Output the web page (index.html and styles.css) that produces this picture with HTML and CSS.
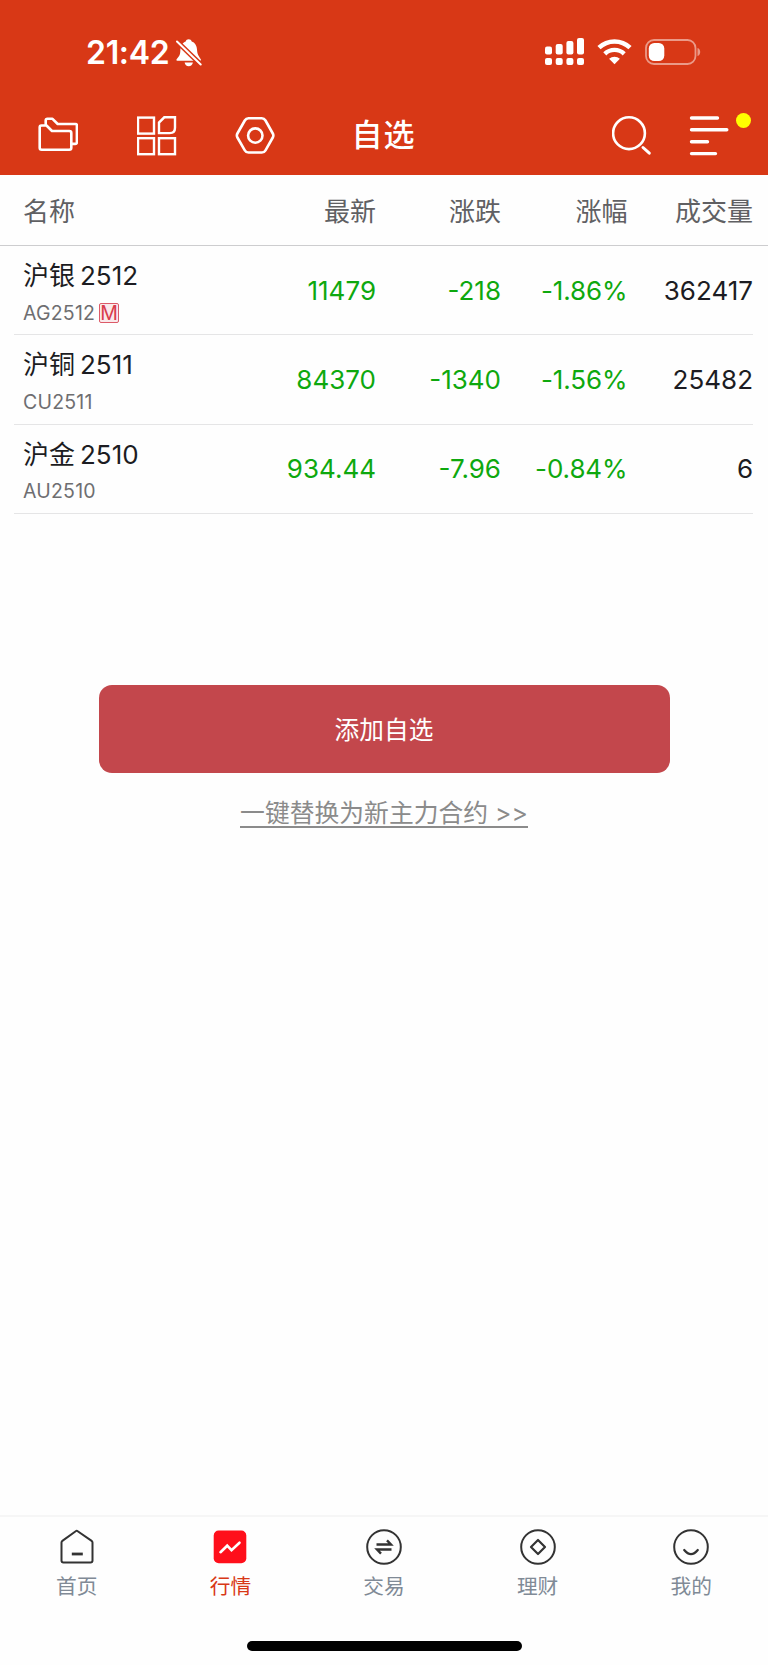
FILE: index.html
```html
<!DOCTYPE html>
<html lang="zh-CN">
<head>
    <meta charset="UTF-8">
    <meta name="viewport" content="width=device-width, initial-scale=1.0">
    <title>自选</title>
    <link rel="stylesheet" href="styles.css">
</head>
<body>
    <header class="header">
        <div class="status-bar">
            <span class="time">21:42</span>
            <svg class="bell" width="26" height="28" viewBox="0 0 26 28">
                <path d="M1.2 21.700C.3 21.700.2 20.800.8 20c1.700-2.200 3.200-3.200 3.500-7.500C4.500 6.500 6.600 3.600 9.700 2.600 10.100 1 11.200.2 12.700.2s2.600.8 3 2.400c3.100 1 5.200 3.900 5.400 8.900.3 4.300 1.800 5.300 3.500 8.500.6.8.5 1.700-.4 1.700z" fill="#fff"/>
                <path d="M8.600 23.500h8.300c-.4 2.400-2 3.700-4.200 3.700s-3.700-1.300-4.100-3.700z" fill="#fff"/>
                <path d="M1 2.500L24.700 25.500" stroke="#d83816" stroke-width="5"/>
                <path d="M1 2.500L24.700 25.500" stroke="#fff" stroke-width="2" stroke-linecap="round"/>
            </svg>
            <div class="status-icons">
                <svg width="39" height="28" viewBox="0 0 39 28" fill="#fff">
                    <rect x="0" y="8.500" width="7" height="8" rx="2"/>
                    <rect x="10.700" y="6" width="7" height="10.500" rx="2"/>
                    <rect x="21.400" y="3" width="7" height="13.500" rx="2"/>
                    <rect x="32" y="0" width="7" height="16.500" rx="2"/>
                    <rect x="0" y="20" width="7" height="7" rx="2"/>
                    <rect x="10.700" y="20" width="7" height="7" rx="2"/>
                    <rect x="21.400" y="20" width="7" height="7" rx="2"/>
                    <rect x="32" y="20" width="7" height="7" rx="2"/>
                </svg>
                <svg width="35" height="26" viewBox="0 0 35 26">
                    <path d="M2 8.700a22.500 22.500 0 0 1 31 0" fill="none" stroke="#fff" stroke-width="4.600"/>
                    <path d="M7.800 14.800a14 14 0 0 1 19.400 0" fill="none" stroke="#fff" stroke-width="4.400"/>
                    <path d="M17.500 25.200l-5.400-5.400a8 8 0 0 1 10.800 0z" fill="#fff"/>
                </svg>
                <svg class="battery" width="57" height="26" viewBox="0 0 57 26">
                    <rect x="1" y="1" width="49.500" height="24" rx="8" fill="none" stroke="#eb9a88" stroke-width="1.800"/>
                    <rect x="3.800" y="4" width="15.500" height="18" rx="5.500" fill="#fff"/>
                    <path d="M52.500 9c3.600 1 3.600 7 0 8z" fill="#eb9a88"/>
                </svg>
            </div>
        </div>
        <nav class="nav-bar">
            <svg width="40" height="40" viewBox="0 0 40 40" fill="none" stroke="#fff" stroke-width="2.600" stroke-linejoin="round">
                <path d="M1.700 11.200q0-1.700 1.700-1.700H8.500L14 15H31.300q2 0 2 2V31.700q0 2-2 2H3.700q-2 0-2-2z"/>
                <path d="M7.700 9V4.500q0-1.700 1.700-1.700H14.500L19.700 8H37.500q1.400 0 1.400 1.400V26.300q0 1.600-1.600 1.600H34"/>
            </svg>
            <svg width="40" height="40" viewBox="0 0 40 40" fill="none" stroke="#fff" stroke-width="2.400">
                <rect x="1" y="1.600" width="16" height="16"/>
                <rect x="1" y="22.200" width="16" height="16"/>
                <rect x="22" y="22.200" width="16" height="16"/>
                <path d="M22 17.100V6.600l5.300-5.300h10.700v10.500q0 5.300-5.300 5.300z"/>
            </svg>
            <svg class="settings" width="40" height="40" viewBox="0 0 40 40" fill="none" stroke="#fff" stroke-width="2.600">
                <path d="M13.500 2.300h13.300q2.400 0 3.700 2.200l7.300 13q1.100 2 0 4l-7.300 12.800q-1.300 2.200-3.700 2.200H13.500q-2.400 0-3.700-2.200L2.400 21.500q-1.100-2 0-4l7.400-13q1.300-2.200 3.700-2.200z"/>
                <circle cx="20.300" cy="19.600" r="7.200"/>
            </svg>
            <h1 class="title">自选</h1>
            <svg class="search" width="40" height="40" viewBox="0 0 40 40" fill="none" stroke="#fff" stroke-width="2.600">
                <circle cx="17" cy="17.200" r="15.900"/>
                <path d="M31 31.500l6.300 5.700" stroke-width="3" stroke-linecap="round"/>
            </svg>
            <div class="menu">
                <svg width="40" height="41" viewBox="0 0 40 41" stroke="#fff" stroke-width="3.400" stroke-linecap="round">
                    <path d="M2.500 3h26M2.500 14.800h35.300M2.500 26.700h16M2.500 38.600h24"/>
                </svg>
                <span class="dot"></span>
            </div>
        </nav>
    </header>

    <main class="content">
        <div class="table-head">
            <span>名称</span>
            <span class="num">最新</span>
            <span class="num">涨跌</span>
            <span class="num">涨幅</span>
            <span class="num">成交量</span>
        </div>
        <div class="row">
            <div class="contract">
                <div class="name">沪银<span class="month">2512</span></div>
                <div class="code">AG2512<span class="main-tag">M</span></div>
            </div>
            <span class="num down">11479</span>
            <span class="num down">-218</span>
            <span class="num down percent">-1.86%</span>
            <span class="num">362417</span>
        </div>
        <div class="row">
            <div class="contract">
                <div class="name">沪铜<span class="month">2511</span></div>
                <div class="code">CU2511</div>
            </div>
            <span class="num down">84370</span>
            <span class="num down">-1340</span>
            <span class="num down percent">-1.56%</span>
            <span class="num">25482</span>
        </div>
        <div class="row">
            <div class="contract">
                <div class="name">沪金<span class="month">2510</span></div>
                <div class="code">AU2510</div>
            </div>
            <span class="num down">934.44</span>
            <span class="num down">-7.96</span>
            <span class="num down percent">-0.84%</span>
            <span class="num">6</span>
        </div>

        <button class="add-btn">添加自选</button>
        <a class="replace-link" href="#">一键替换为新主力合约 &gt;&gt;</a>
    </main>

    <footer class="tab-bar">
        <div class="tabs">
            <a class="tab" href="#">
                <svg width="36" height="36" viewBox="0 0 36 36" fill="none" stroke="#333" stroke-width="2" stroke-linejoin="round">
                    <path d="M16.700 2.200q1-.7 2 0L32.300 11.600q1.200.9 1.200 2V31.400q0 2-2 2H4.500q-2 0-2-2V13.600q0-1.100 1.200-2z"/>
                    <path d="M12.800 25h11" stroke-width="2.800"/>
                </svg>
                <span>首页</span>
            </a>
            <a class="tab active" href="#">
                <svg width="36" height="36" viewBox="0 0 36 36" fill="none">
                    <rect x="1.700" y="1.600" width="32.600" height="32.600" rx="5" fill="#ff0f1b"/>
                    <path d="M8.500 23.200l6.700-6.500 4.300 4.500 8-7.500" stroke="#fff" stroke-width="2.600" stroke-linecap="round"/>
                </svg>
                <span>行情</span>
            </a>
            <a class="tab" href="#">
                <svg width="36" height="36" viewBox="0 0 36 36" fill="none" stroke="#333" stroke-width="2">
                    <circle cx="18" cy="18" r="16.800"/>
                    <path d="M10.500 15.500h14.500l-4-4.200M25.500 20.500H11l4 4.200" stroke-width="2.400"/>
                </svg>
                <span>交易</span>
            </a>
            <a class="tab" href="#">
                <svg width="36" height="36" viewBox="0 0 36 36" fill="none" stroke="#333" stroke-width="2">
                    <circle cx="18" cy="18" r="16.800"/>
                    <path d="M18 11l7 7-7 7-7-7z" stroke-width="2.200" stroke-linejoin="round"/>
                </svg>
                <span>理财</span>
            </a>
            <a class="tab" href="#">
                <svg width="36" height="36" viewBox="0 0 36 36" fill="none" stroke="#333" stroke-width="2">
                    <circle cx="18" cy="18" r="16.800"/>
                    <path d="M11.200 21q6.800 8.200 13.600 0" stroke-width="2.200" stroke-linecap="round"/>
                </svg>
                <span>我的</span>
            </a>
        </div>
        <div class="home-indicator"></div>
    </footer>
</body>
</html>
```
FILE: styles.css
```css
* {
    box-sizing: border-box;
}

body {
    display: flex;
    flex-direction: column;
    height: 1665px;
    margin: 0;
    font-family: Inter, "Noto Sans CJK SC", sans-serif;
    background-color: #fefefe;
    color: #1c1c22;
}

a {
    color: inherit;
    text-decoration: none;
}

svg {
    display: block;
    flex: none;
}

/* header */
.header {
    height: 174.5px;
    background-color: #d83816;
    color: #fff;
}

.status-bar {
    display: flex;
    align-items: center;
    height: 105px;
    padding: 0 66px 0 86px;
}

.time {
    width: 83px;
    font-size: 32px;
    font-weight: 600;
    letter-spacing: -0.3px;
    white-space: nowrap;
}

.bell {
    margin-left: 7px;
}

.status-icons {
    display: flex;
    align-items: center;
    gap: 13px;
    margin: 0 0 2px auto;
}

.nav-bar {
    display: flex;
    align-items: center;
    height: 61px;
    padding: 0 17px 0 37.500px;
    gap: 59px;
}

.settings {
    margin-left: -1px;
}

.title {
    margin: -2px 0 0 18px;
    font-size: 31px;
    font-weight: 500;
    line-height: 40px;
    letter-spacing: 1px;
}

.search {
    margin-left: auto;
}

.menu {
    display: flex;
    margin-left: -22px;
}

.dot {
    width: 15px;
    height: 15px;
    margin: -2px 0 0 7px;
    border-radius: 50%;
    background-color: #ff0;
}

/* quote list */
.content {
    flex: 1;
}

.table-head,
.row {
    display: grid;
    grid-template-columns: 140px 213px 125px 126.500px 125.500px;
    align-items: center;
    font-size: 26px;
}

.table-head {
    height: 71.5px;
    padding-left: 23px;
    border-bottom: 1px solid #cdcdcf;
    color: #606063;
}

.row {
    height: 89.3px;
    margin: 0 15px 0 14px;
    padding-left: 9px;
    border-bottom: 1px solid #e5e5e6;
}

.num {
    text-align: right;
}

.down {
    color: #0ea80e;
}

.percent {
    letter-spacing: -0.1px;
}

.contract {
    padding-top: 7px;
}

.name {
    line-height: 38px;
}

.month {
    margin-left: 5px;
}

.code {
    display: flex;
    align-items: center;
    gap: 4px;
    height: 35px;
    font-size: 19.5px;
    letter-spacing: 0.2px;
    color: #6e6e71;
}

.main-tag {
    width: 20px;
    height: 20px;
    border: 1px solid #dc5a68;
    border-radius: 2px;
    background-color: #fae9eb;
    color: #d83c4c;
    line-height: 18px;
    text-align: center;
}

.add-btn {
    display: block;
    width: 571px;
    height: 87.5px;
    margin: 171.500px auto 0;
    padding: 0 0 3px;
    border: none;
    border-radius: 13px;
    background-color: #c3474c;
    color: #fff;
    font-family: inherit;
    font-size: 24.7px;
}

.replace-link {
    display: block;
    width: fit-content;
    margin: 28px auto 0;
    border-bottom: 2px solid #8b8b8b;
    font-size: 24.8px;
    line-height: 25px;
    color: #8b8b8b;
}

/* bottom tabs */
.tab-bar {
    height: 150px;
    border-top: 2px solid #f6f6f6;
}

.tabs {
    display: flex;
    height: 124px;
    padding-top: 12px;
}

.tab {
    display: flex;
    flex: 1;
    flex-direction: column;
    align-items: center;
    gap: 6px;
    font-size: 20.7px;
    line-height: 32px;
    color: #808a96;
}

.active {
    color: #d83816;
}

.home-indicator {
    width: 275px;
    height: 9.5px;
    margin: 0 auto;
    border-radius: 5px;
    background-color: #000;
}
```
